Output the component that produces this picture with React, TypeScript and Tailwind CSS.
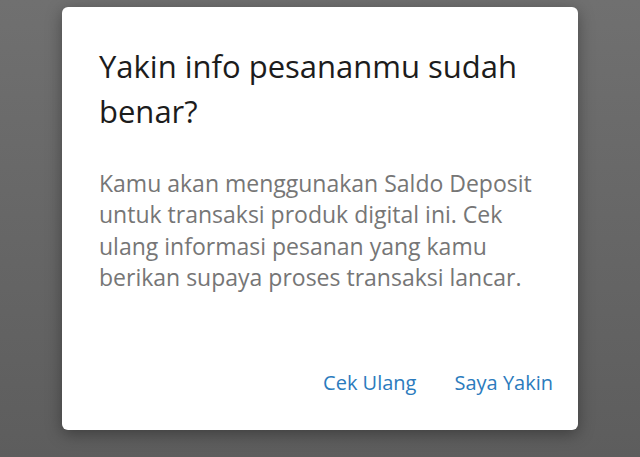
export default function App() {
  return (
    <div className="w-[640px] h-[457px] bg-linear-to-b from-[#707070] to-[#5d5d5d] pt-[7px] font-['Open_Sans',sans-serif]">
      <div className="mx-auto w-[516px] h-[423px] bg-white rounded-[6px] shadow-[0_4px_16px_rgba(0,0,0,0.35)] flex flex-col px-[37px] pt-[37px]">
        <h1 className="text-[31px] leading-[45px] text-[#1c1c1c]">
          Yakin info pesananmu sudah benar?
        </h1>
        <p className="mt-[34px] text-[23px] leading-[31.3px] text-[#767676] -mr-[10px]">
          Kamu akan menggunakan Saldo Deposit untuk transaksi produk digital ini. Cek ulang informasi pesanan yang kamu berikan supaya proses transaksi lancar.
        </p>
        <div className="mt-auto mb-[32px] flex justify-end gap-[38px] -mr-[12px]">
          <button className="text-[20px] text-[#2b7bbd]">Cek Ulang</button>
          <button className="text-[20px] text-[#2b7bbd]">Saya Yakin</button>
        </div>
      </div>
    </div>
  );
}
